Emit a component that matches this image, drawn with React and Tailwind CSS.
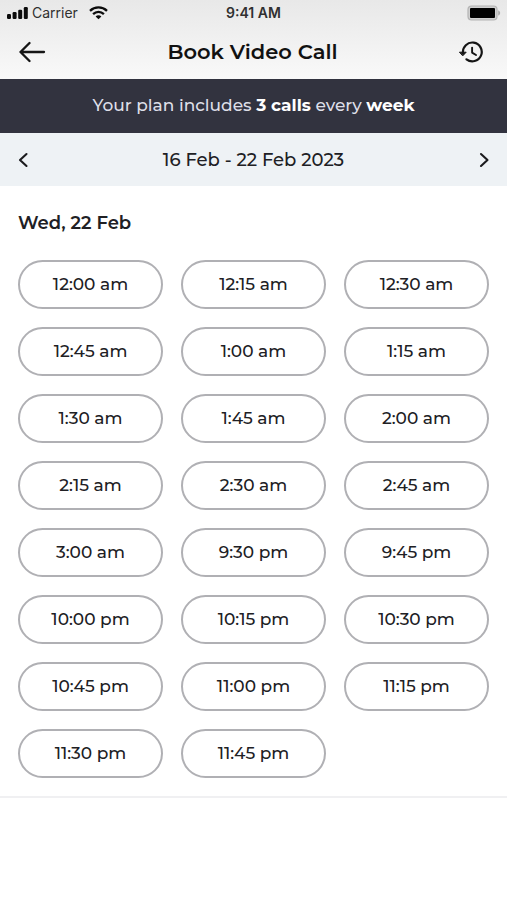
import React from "react";

const slots = [
  "12:00 am", "12:15 am", "12:30 am",
  "12:45 am", "1:00 am", "1:15 am",
  "1:30 am", "1:45 am", "2:00 am",
  "2:15 am", "2:30 am", "2:45 am",
  "3:00 am", "9:30 pm", "9:45 pm",
  "10:00 pm", "10:15 pm", "10:30 pm",
  "10:45 pm", "11:00 pm", "11:15 pm",
  "11:30 pm", "11:45 pm",
];

function StatusBar() {
  return (
    <div className="grid h-[26px] grid-cols-3 items-center font-['Inter',sans-serif] text-sm text-[#303030]">
      <div className="flex items-center pl-[7px]">
        <svg className="h-3 w-[21px]" viewBox="0 0 21 12" fill="#0c0c0c" aria-hidden="true">
          <rect x="0" y="7" width="4" height="5" rx="1.2" />
          <rect x="5.6" y="5" width="4" height="7" rx="1.2" />
          <rect x="11.2" y="2.8" width="4" height="9.2" rx="1.2" />
          <rect x="16.8" y="0" width="4" height="12" rx="1.2" />
        </svg>
        <span className="ml-1">Carrier</span>
        <svg className="ml-[11px] h-[14px] w-[19px]" viewBox="0 0 19 14" fill="none" stroke="#0c0c0c" strokeWidth="2.3" aria-hidden="true">
          <path d="M1 4.9C5.8.3 13.2.3 18 4.9" />
          <path d="M4.1 8.2C7.2 5.2 11.8 5.2 14.9 8.2" />
          <path d="M9.5 13.3 6.6 10.4C8.2 8.9 10.8 8.9 12.4 10.4Z" fill="#0c0c0c" stroke="none" />
        </svg>
      </div>
      <span className="text-center font-semibold">9:41 AM</span>
      <svg className="mr-[6px] h-[16px] w-[34px] justify-self-end" viewBox="0 0 34 16" aria-hidden="true">
        <rect x="1" y="1" width="29" height="14" rx="3.5" fill="#d0d0d0" stroke="#b4b4b4" strokeWidth="1.2" />
        <rect x="3" y="3" width="25" height="10" rx="1" fill="#000" />
        <path d="M31.2 5.5C33.8 6 33.8 10 31.2 10.5Z" fill="#aaa" />
      </svg>
    </div>
  );
}

export default function App() {
  return (
    <main className="min-h-screen bg-white font-['Montserrat','Inter',sans-serif] text-[#202024]">
      <header className="h-[79px] bg-linear-to-b from-[#e8e8e8] to-[#f9f9f9]">
        <StatusBar />
        <div className="flex h-[51px] items-center justify-between pr-[23px] pl-[19px]">
          <button type="button" aria-label="Back">
            <svg className="block h-[22px] w-[27px]" viewBox="0 0 27 22" fill="none" stroke="#151515" strokeWidth="2.3" strokeLinecap="round" strokeLinejoin="round" aria-hidden="true">
              <path d="M25 11H1.5M10.5 2 1.5 11 10.5 20" />
            </svg>
          </button>
          <h1 className="text-[21px] font-semibold text-[#111]">Book Video Call</h1>
          <button type="button" aria-label="Call history">
            <svg className="block h-[22px] w-[25px]" viewBox="0 0 25 22" fill="none" stroke="#151515" strokeWidth="2.2" strokeLinecap="round" strokeLinejoin="round" aria-hidden="true">
              <path d="M4 12A9.4 9.4 0 1 1 7.5 18.3" />
              <path d="M.8 11.2H7.2L4 14.6Z" fill="#151515" strokeWidth="1" />
              <path d="M13.1 6.6V11.6L17 14" strokeWidth="1.9" />
            </svg>
          </button>
        </div>
      </header>

      <p className="flex h-[54px] items-center justify-center bg-[#32333f] text-[17px] font-medium text-[#dedfe8]">
        <span>
          Your plan includes <strong className="font-bold text-white">3 calls</strong> every{" "}
          <strong className="font-bold text-white">week</strong>
        </span>
      </p>

      <nav aria-label="Week" className="flex h-[53px] items-center justify-between bg-[#eef2f5] px-[18px]">
        <button type="button" aria-label="Previous week">
          <svg className="block h-4 w-[10px]" viewBox="0 0 10 16" fill="none" stroke="#1b1b1e" strokeWidth="2.1" strokeLinecap="round" strokeLinejoin="round" aria-hidden="true">
            <path d="M8.5 2 2 8 8.5 14" />
          </svg>
        </button>
        <span className="text-lg font-medium">16 Feb - 22 Feb 2023</span>
        <button type="button" aria-label="Next week">
          <svg className="block h-4 w-[10px]" viewBox="0 0 10 16" fill="none" stroke="#1b1b1e" strokeWidth="2.1" strokeLinecap="round" strokeLinejoin="round" aria-hidden="true">
            <path d="M2 2 8.5 8 2 14" />
          </svg>
        </button>
      </nav>

      <section className="border-b-2 border-[#f0f0f2] px-[18px] pt-6 pb-[18px]">
        <h2 className="text-lg leading-[26px] font-semibold">Wed, 22 Feb</h2>
        <div className="mt-6 grid grid-cols-3 gap-[18px]">
          {slots.map((slot) => (
            <button
              key={slot}
              type="button"
              className="h-[49px] rounded-full border-2 border-[#b0b0b4] bg-white text-[17px] font-medium"
            >
              {slot}
            </button>
          ))}
        </div>
      </section>
    </main>
  );
}
